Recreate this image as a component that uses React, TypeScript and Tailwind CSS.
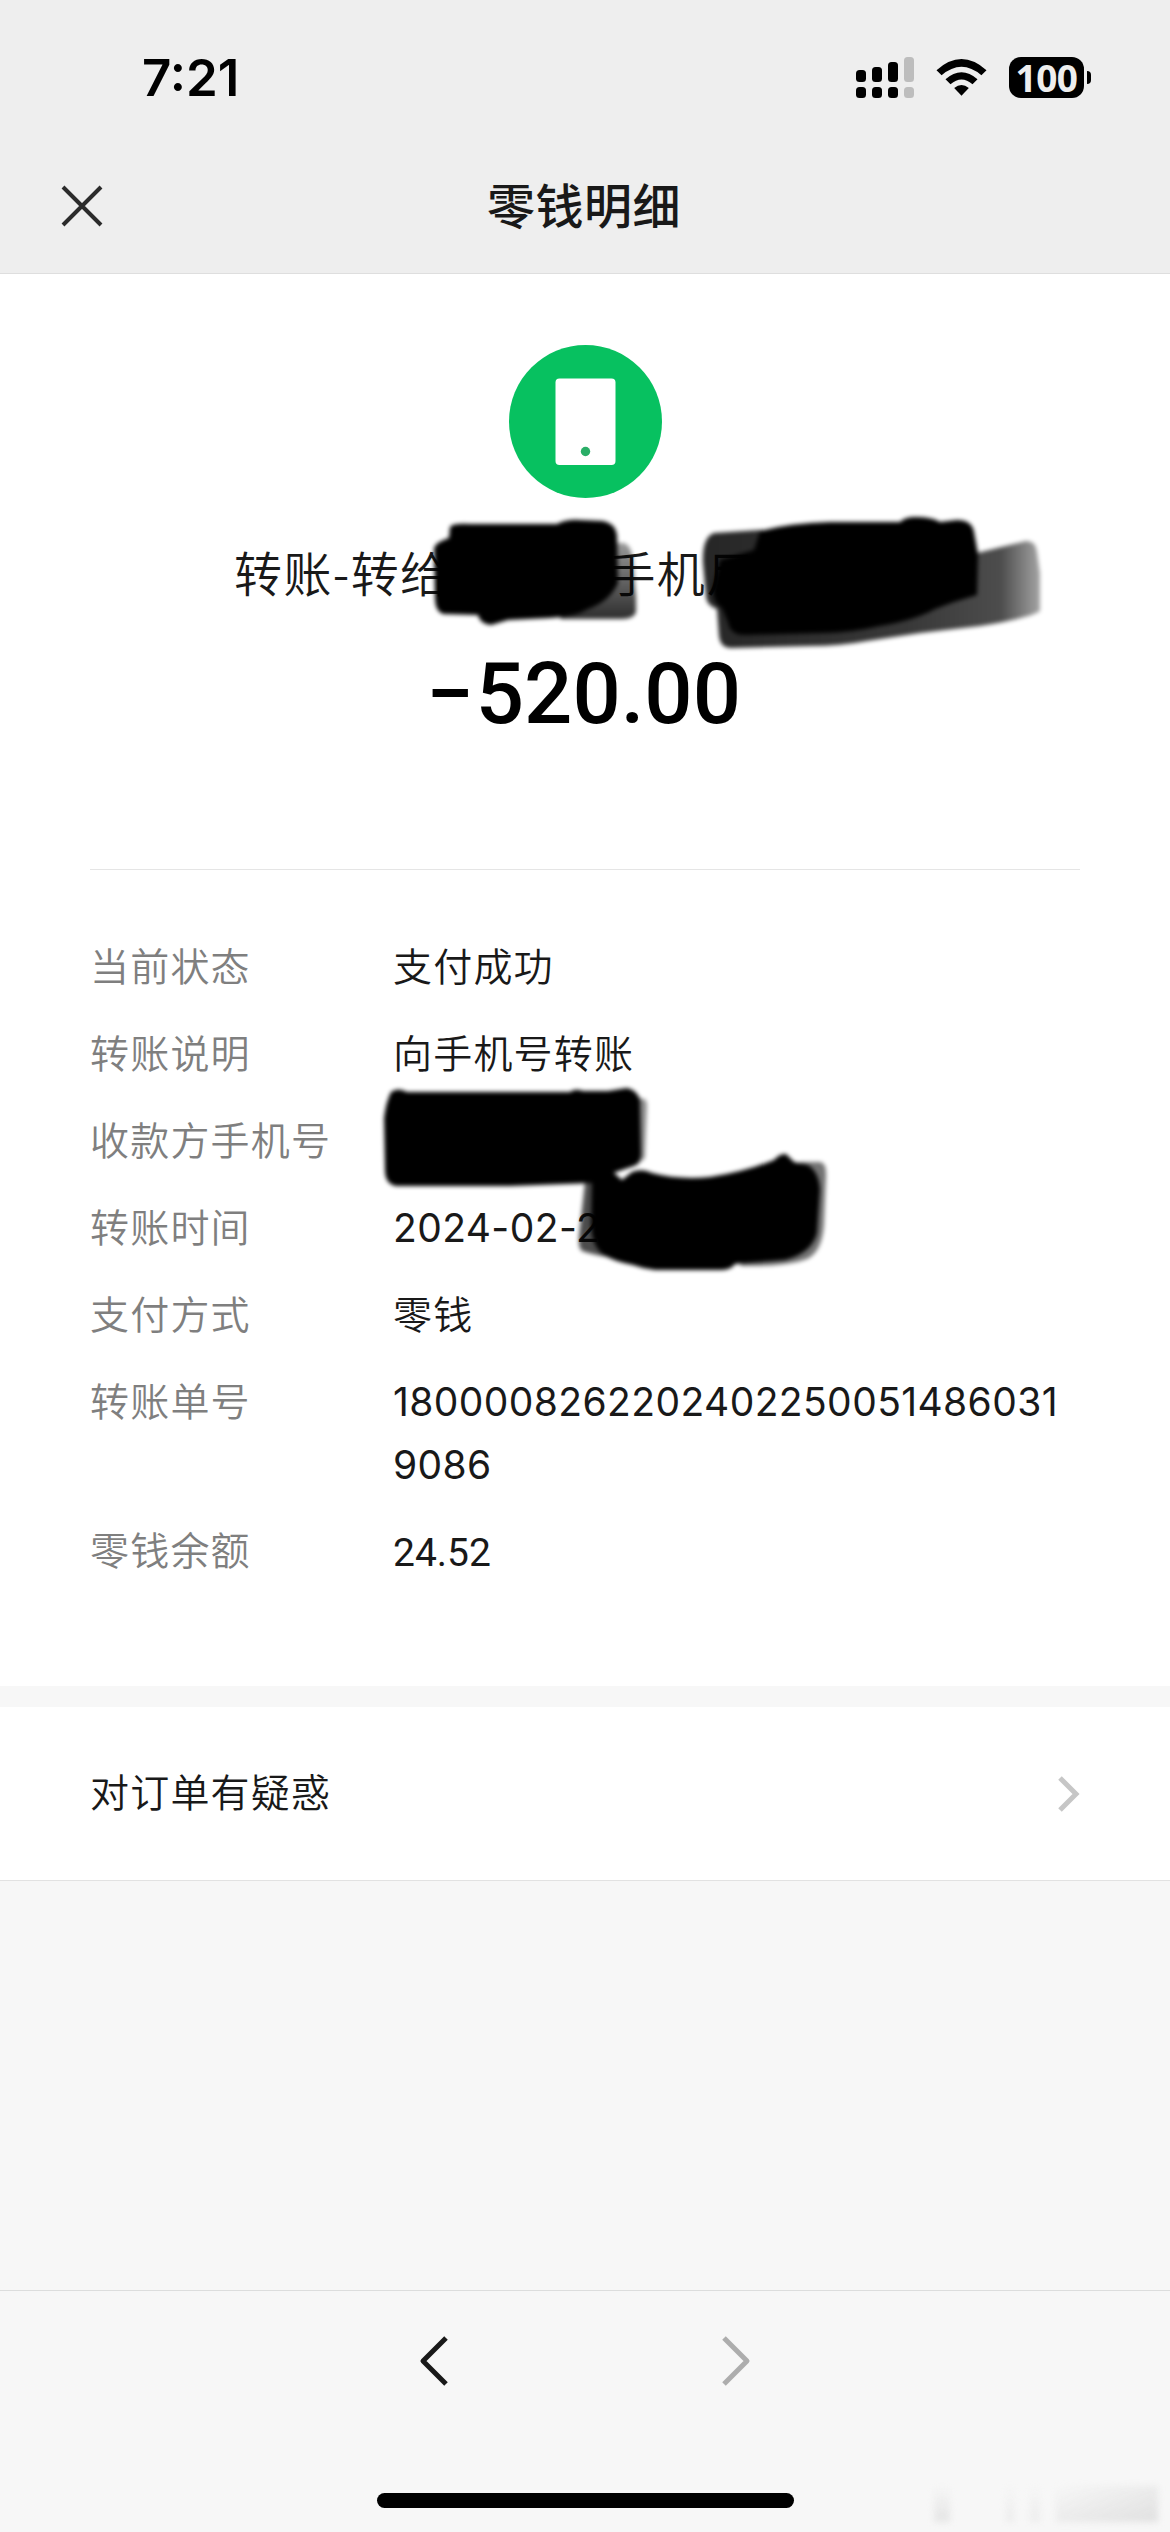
import type { ReactNode } from "react";

const SANS = "font-['Inter','Noto_Sans_CJK_SC',sans-serif]";
const CJK = "font-['Noto_Sans_CJK_SC',sans-serif]";

function SignalIcon() {
  const bars = [
    { x: 0, y: 13, h: 12 },
    { x: 16, y: 10, h: 15 },
    { x: 32, y: 5, h: 20 },
    { x: 48, y: 0, h: 25 },
  ];
  return (
    <svg width="58" height="41" viewBox="0 0 58 41">
      {bars.map((b, i) => (
        <g key={b.x} fill={i === 3 ? "#bdbdbd" : "#000"}>
          <rect x={b.x} y={b.y} width="10" height={b.h} rx="3.5" />
          <rect x={b.x} y="30" width="10" height="11" rx="3.5" />
        </g>
      ))}
    </svg>
  );
}

function WifiIcon() {
  return (
    <svg width="51" height="37" viewBox="0 0 51 37">
      <path d="M0.5 11.2 Q25.5 -11.2 50.5 11.2 L45.4 16.2 Q25.5 -0.8 5.6 16.2 Z" />
      <path d="M9.5 20.2 Q25.5 6.2 41.5 20.2 L36.5 25.2 Q25.5 15.8 14.5 25.2 Z" />
      <path d="M18.2 29 Q25.5 22.8 32.8 29 L25.5 36.8 Z" />
    </svg>
  );
}

function Battery() {
  return (
    <div className="flex items-center gap-[3px]">
      <div className="flex h-[41px] w-[75px] items-center justify-center rounded-[12px] bg-black font-['Noto_Sans',sans-serif] text-[37px] leading-[41px] font-bold tracking-[-0.5px] text-[#eeeeee]">
        100
      </div>
      <div className="h-[13px] w-[4px] rounded-r-full bg-black" />
    </div>
  );
}

function Row({ label, children }: { label: string; children?: ReactNode }) {
  return (
    <div className="flex min-h-[63px] text-[39px] leading-[63px] font-[350] tracking-[1.2px]">
      <div className={`-mt-[3px] w-[303px] shrink-0 text-[#7f7f7f] ${CJK}`}>{label}</div>
      <div className={`-mt-px min-w-0 flex-1 text-[#191919] ${SANS}`}>{children}</div>
    </div>
  );
}

function MarkerStrokes() {
  return (
    <svg
      className="pointer-events-none absolute top-0 left-0"
      width="1170"
      height="1412"
      viewBox="0 274 1170 1412"
    >
      <defs>
        <filter id="soft" x="-10%" y="-10%" width="120%" height="120%">
          <feGaussianBlur stdDeviation="2" />
        </filter>
        <linearGradient id="tail" x1="705" x2="1041" y1="0" y2="0" gradientUnits="userSpaceOnUse">
          <stop offset="0" stopOpacity="0.85" />
          <stop offset="0.6" stopOpacity="0.78" />
          <stop offset="0.88" stopOpacity="0.7" />
          <stop offset="1" stopOpacity="0.35" />
        </linearGradient>
        <linearGradient id="edge" x1="0" x2="0" y1="543" y2="615" gradientUnits="userSpaceOnUse">
          <stop offset="0" stopOpacity="0.4" />
          <stop offset="1" stopOpacity="0.8" />
        </linearGradient>
      </defs>
      <g filter="url(#soft)">
        <path fill="url(#edge)" d="M600 543 H624 Q632 546 633 562 L636 598 V612 Q634 619 622 619 L560 619 Z" />
        <path d="M450 527 Q453 523 470 524 L557 524 Q567 519 580 520 L603 521 Q615 523 617 535 L618 583 Q610 601 588 609 Q575 617 550 618 L508 620 L491 625 Q480 624 478 615 L443 614 Q435 611 435 598 L434 548 Q436 542 449 538 Z" />
        <path fill="url(#tail)" d="M714 533 L760 530 L977 553 L1026 541 Q1036 541 1037 552 L1040 573 V611 Q1030 618 980 626 L920 633 L867 641 Q840 646 810 646 L730 648 Q720 647 719 636 L717 609 Q706 605 706 596 L703 563 Q702 537 714 533 Z" />
        <path d="M760 531 Q790 523 830 522 L900 522 Q905 517 915 517 Q932 517 940 522 L957 520 Q972 520 974 532 L978 554 L977 595 Q955 601 935 609 Q915 620 880 626 Q850 633 823 633 L745 635 Q730 635 728 622 L722 608 Q712 602 713 588 L720 560 L754 550 Z" />
        <path fillOpacity="0.45" d="M632 1097 L644 1099 Q647 1100 647 1106 L645 1158 L636 1166 Z" />
        <path d="M391 1092 Q398 1087 407 1092 L570 1092 Q575 1088 583 1091 L608 1091 L627 1088 Q637 1090 640 1100 L641 1155 Q640 1166 628 1168 L613 1173 L592 1183 L510 1186 L396 1186 Q385 1184 385 1170 L384 1118 Q386 1102 391 1092 Z" />
        <path fillOpacity="0.7" d="M585 1182 H615 V1258 Q597 1256 582 1251 Q578 1248 579 1236 Z" />
        <path fillOpacity="0.55" d="M800 1162 L820 1162 Q827 1163 826 1178 L824 1225 Q822 1252 807 1259 Q785 1267 740 1266 Z" />
        <path d="M592 1178 L613 1172 L622 1180 L632 1172 Q642 1168 652 1173 Q678 1180 710 1177 Q744 1172 774 1160 Q780 1153 786 1154 L794 1162 L808 1165 Q819 1172 820 1190 L817 1233 Q812 1253 785 1260 L735 1264 Q731 1270 720 1270 L655 1270 Q644 1269 633 1265 Q613 1261 604 1255 Q592 1247 591 1225 Z" />
      </g>
    </svg>
  );
}

export default function App() {
  return (
    <div className={`flex h-[2532px] w-[1170px] flex-col overflow-hidden bg-[#f7f7f7] ${CJK}`}>
      <header className="flex h-[274px] flex-col border-b border-[#dedede] bg-[#eeeeee]">
        <div className="flex h-[155px] items-center justify-between pr-[79px] pl-[142px]">
          <div className="font-['Inter',sans-serif] text-[51px] leading-none font-semibold text-black">7:21</div>
          <div className="flex items-center">
            <SignalIcon />
            <div className="mr-[22px] ml-[22px] flex">
              <WifiIcon />
            </div>
            <Battery />
          </div>
        </div>
        <div className="grid h-[102px] grid-cols-3 items-center">
          <svg className="ml-[60px]" width="44" height="44" viewBox="0 0 44 44" fill="none" stroke="#2b2b2b" strokeWidth="4">
            <path d="M3 3 41 41M41 3 3 41" />
          </svg>
          <h1 className="pr-[2px] pb-[6px] text-center text-[48px] leading-[60px] font-medium tracking-[0.5px] whitespace-nowrap text-[#191919]">
            零钱明细
          </h1>
        </div>
      </header>

      <main className="relative h-[1412px] shrink-0 bg-white px-[90px] pt-[71px]">
        <svg className="mx-auto block" width="153" height="153" viewBox="0 0 153 153">
          <circle cx="76.5" cy="76.5" r="76.5" fill="#07c160" />
          <rect x="46.5" y="33.5" width="60" height="86.5" rx="4" fill="#fff" />
          <circle cx="76.5" cy="106.5" r="4.7" fill="#2aae67" />
        </svg>
        <div className="mt-[35px] ml-[144px] flex h-[76px] items-center text-[48px] font-[350] tracking-[1.4px] text-[#191919]">
          <span>转账-转给</span>
          <span className="ml-[158px]">手机尸</span>
        </div>
        <div className="mt-[43px] h-[84px] text-center font-['Roboto',sans-serif] text-[85px] leading-[84px] font-medium text-black">
          <span className="mr-[2px] -ml-[3px]">−</span>520.00
        </div>
        <div className="mt-[133px] h-px bg-[#e5e5e5]" />
        <div className="flex flex-col gap-6 pt-[66px]">
          <Row label="当前状态">支付成功</Row>
          <Row label="转账说明">向手机号转账</Row>
          <Row label="收款方手机号" />
          <Row label="转账时间">
            <span className="font-normal tracking-[0.4px]">2024-02-2</span>
          </Row>
          <Row label="支付方式">零钱</Row>
          <Row label="转账单号">
            <span className="font-normal tracking-[0.4px]">
              1800008262202402250051486031
              <br />
              9086
            </span>
          </Row>
          <Row label="零钱余额">
            <span className="inline-block pt-[3px] font-['Roboto',sans-serif] font-normal tracking-normal">24.52</span>
          </Row>
        </div>
        <MarkerStrokes />
      </main>

      <section className="mt-[21px] flex h-[174px] shrink-0 items-center justify-between border-b border-[#e2e2e2] bg-white pr-[90px] pl-[90px]">
        <span className="pb-[8px] text-[39px] leading-[60px] font-[350] tracking-[1.2px] text-[#191919]">对订单有疑惑</span>
        <svg width="24" height="36" viewBox="0 0 24 36" fill="none" stroke="#c6c6c6" strokeWidth="5">
          <path d="M4 2 20 18 4 34" />
        </svg>
      </section>

      <footer className="mt-auto flex h-[242px] flex-col items-center border-t border-[#dcdddd]">
        <nav className="mt-[42px] flex h-[56px] w-[334px] items-center justify-between">
          <svg width="32" height="56" viewBox="0 0 32 56" fill="none" strokeWidth="5" strokeLinejoin="round" stroke="#191919">
            <path d="M28 5 5 28 28 51" />
          </svg>
          <svg width="32" height="56" viewBox="0 0 32 56" fill="none" strokeWidth="5" strokeLinejoin="round" stroke="#adadad">
            <path d="M4 5 27 28 4 51" />
          </svg>
        </nav>
        <div className="mt-[104px] h-[15px] w-[417px] rounded-full bg-black" />
        <div className="-mt-[22px] mr-[12px] flex h-[36px] w-[224px] gap-4 self-end blur-[3px]">
          <div className="h-full w-[16px] bg-linear-to-b from-transparent to-[#e4e4e4]" />
          <div className="ml-[40px] h-full w-[8px] bg-linear-to-b from-transparent to-[#ebebeb]" />
          <div className="h-full w-[10px] bg-linear-to-b from-transparent to-[#ececec]" />
          <div className="h-full flex-1 bg-linear-to-br from-transparent to-[#e0e0e0]" />
        </div>
      </footer>
    </div>
  );
}
